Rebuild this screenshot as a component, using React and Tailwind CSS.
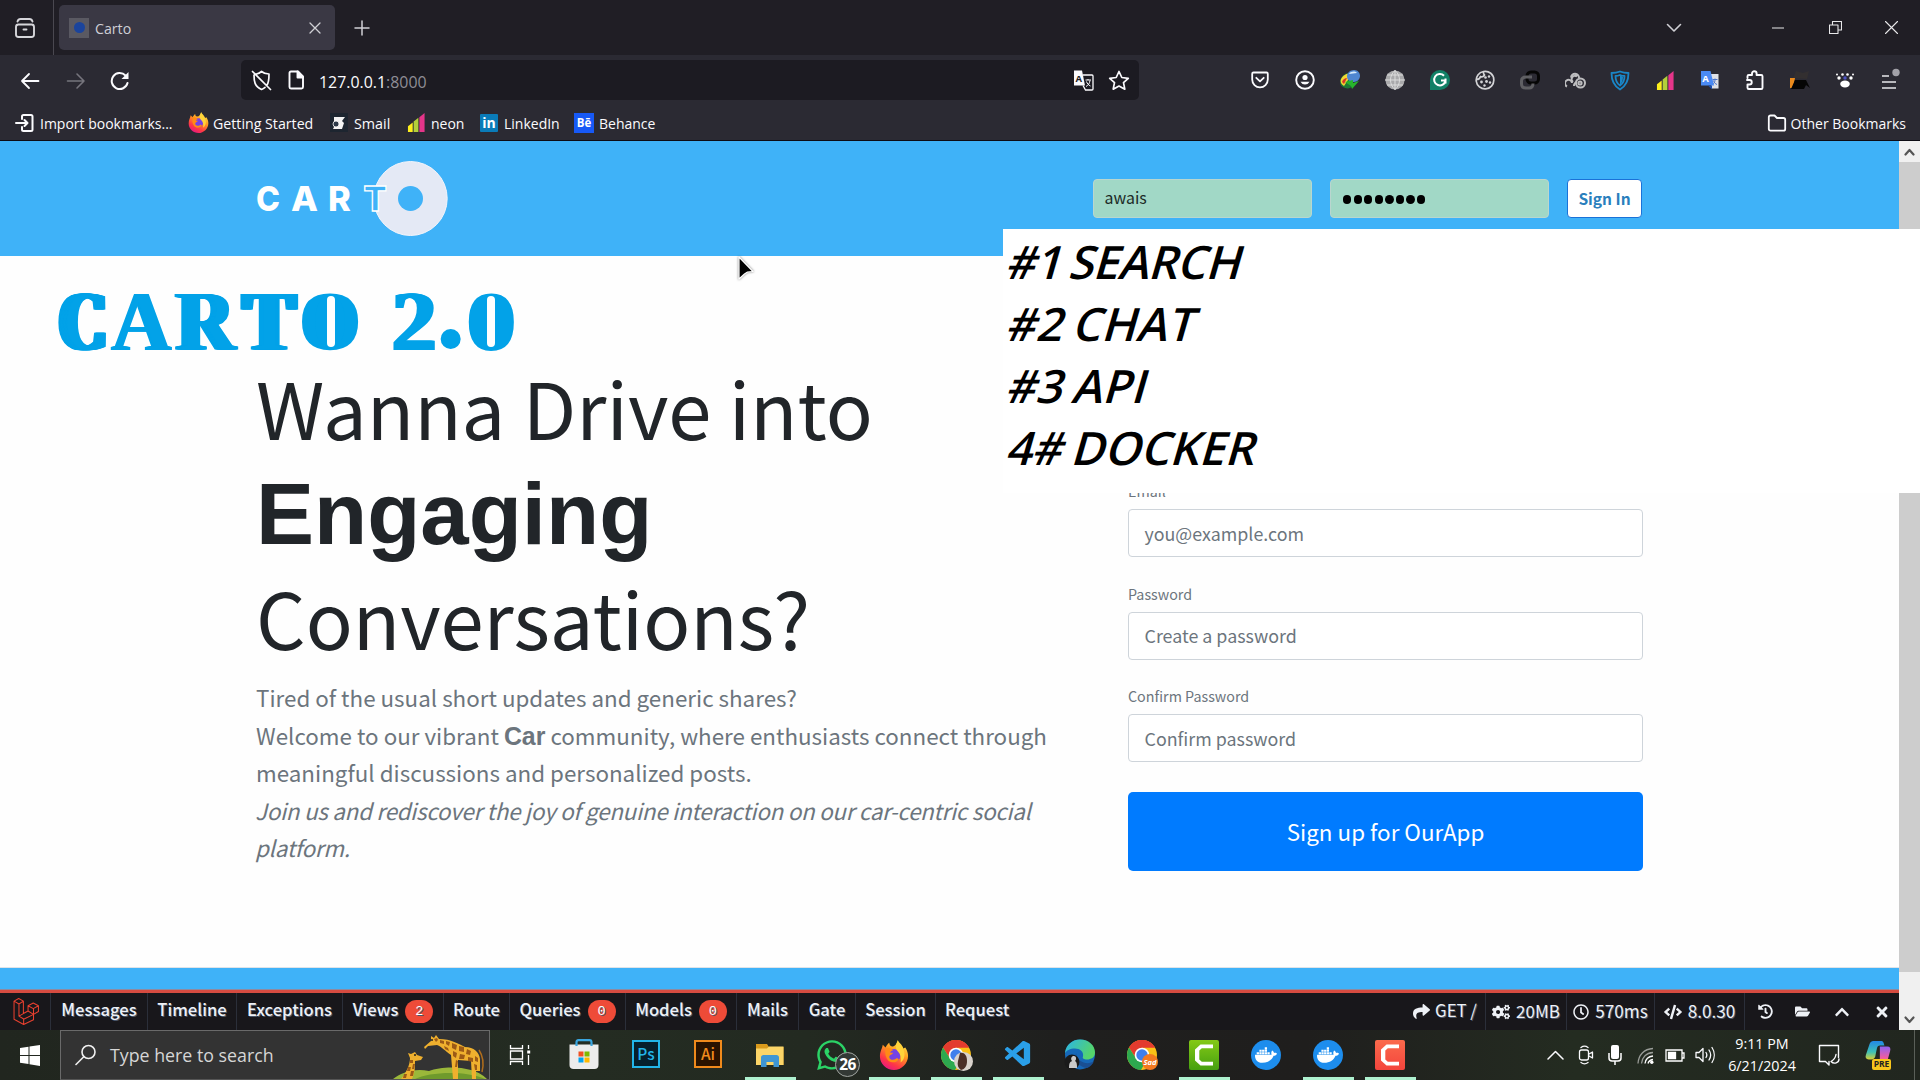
import React from "react";
import { FaShare, FaCogs, FaRegClock, FaCode, FaHistory, FaFolderOpen, FaChevronUp, FaTimes, FaWhatsapp, FaDocker } from "react-icons/fa";
import { VscVscode } from "react-icons/vsc";

/* ---------- shared icons ---------- */

const Line = ({ w = 20, h = 20, box = "0 0 20 20", sw = 1.8, color = "#fbfbfe", children, ...p }) => (
  <svg width={w} height={h} viewBox={box} fill="none" stroke={color} strokeWidth={sw} strokeLinecap="round" strokeLinejoin="round" {...p}>
    {children}
  </svg>
);

function Firefox({ size }) {
  return (
    <svg width={size} height={size} viewBox="0 0 32 32">
      <defs>
        <linearGradient id="ffx" x1="0.8" y1="0" x2="0.25" y2="1">
          <stop offset="0" stopColor="#fff44f" />
          <stop offset="0.4" stopColor="#ff9a1f" />
          <stop offset="0.75" stopColor="#ff3647" />
          <stop offset="1" stopColor="#e31587" />
        </linearGradient>
      </defs>
      <path d="M20 0c1 3 5 5 6 9l2-1c2 3 3 6 3 9 0 8-7 15-15 15S1 25.500 1 17.500C1 12 3.500 9 4 5l3 3c1-2 2.500-4 4-5 0 2 1 3.500 3 4 3 0 5-3 6-7z" fill="url(#ffx)" />
      <circle cx="16" cy="16.500" r="7" fill="#7542e5" />
      <path d="M7 9c3-1 6 0 8 2-2 .5-3 1.500-3 2.500h3c0 2-4 2-4 4.500 0 3 4 4 7 2 1-1 3 0 3 1-2 3-7 4-11 1-3-3-4-8-3-13z" fill="#ff8a16" />
      <path d="M20 1c1 3 6 6 7 12 1 5-1 9-4 11 1-5 0-9-3-12-2-2-3-6 0-11z" fill="#ffd43a" />
    </svg>
  );
}

function Neon({ size }) {
  return (
    <svg width={size} height={size} viewBox="0 0 20 20">
      <path d="M1 14l5-4v10H1z" fill="#fdee1c" />
      <path d="M7 9l5-4v15H7z" fill="#b3cf3a" />
      <path d="M13 4.500L18.500 0v20H13z" fill="#e5358a" />
    </svg>
  );
}

function Chrome({ children }) {
  return (
    <svg width="36" height="36" viewBox="0 0 36 36" className="ml-[2px] shrink-0">
      <circle cx="17" cy="18" r="15" fill="#fbc116" />
      <path d="M4 10.500A15 15 0 0 1 30 10.500H17z" fill="#e33b2e" />
      <path d="M4 10.500L11 21.500 17 18V10.500h13A15 15 0 0 0 4 10.500z" fill="#e33b2e" />
      <path d="M4 10.500A15 15 0 0 0 16 33l6.500-11.500L11 21.500z" fill="#2da94f" />
      <circle cx="17" cy="18" r="7.300" fill="#fff" />
      <circle cx="17" cy="18" r="5.700" fill="#3f7fec" />
      {children}
    </svg>
  );
}

/* ---------- browser chrome ---------- */

function TabBar() {
  return (
    <div className="flex h-[55px] shrink-0 items-center bg-[#201e25]">
      <div className="flex h-full w-[54px] items-center justify-center border-r border-[#4a4850] pr-1">
        <Line w={22} h={22} box="0 0 22 22" sw={1.9} color="#d6d6da">
          <rect x="2" y="7.500" width="18" height="12.500" rx="2.500" />
          <path d="M3.500 4.500C4 2.800 5 2 6.500 2h9c1.500 0 2.500.8 3 2.500M9.500 12.500h3" />
        </Line>
      </div>
      <div className="ml-[5px] flex h-[45px] w-[276px] items-center rounded-[5px] bg-[#3a3844] pl-[10px] pr-[13px]">
        <div className="flex h-5 w-5 items-center justify-center bg-[#5a5962]">
          <div className="h-[11px] w-[11px] rounded-full bg-[#1b449c]" />
        </div>
        <span className="ml-[6px] flex-1 pt-[2px] text-[14.2px] text-[#cfcfd6]">Carto</span>
        <Line w={14} h={14} box="0 0 14 14" sw={1.3} color="#d0d0d5"><path d="M2 2l10 10M12 2L2 12" /></Line>
      </div>
      <Line w={18} h={18} box="0 0 18 18" sw={1.5} color="#d0d0d5" className="ml-[18px]"><path d="M9 2v14M2 9h14" /></Line>
      <div className="ml-auto flex items-center">
        <Line w={18} h={18} box="0 0 18 18" sw={1.6} color="#d0d0d5" className="mr-[89px]"><path d="M2.500 5.500L9 12l6.500-6.500" /></Line>
        <Line w={12} h={12} box="0 0 12 12" sw={1.1} color="#e8e8ea" className="mr-[45px]"><path d="M0 6h12" /></Line>
        <Line w={13} h={13} box="0 0 13 13" sw={1.1} color="#e8e8ea" className="mr-[43px]"><path d="M.5 4h8.500v8.500H.5zM3.500 4V.5h9V9H9" /></Line>
        <Line w={13} h={13} box="0 0 13 13" sw={1.1} color="#e8e8ea" className="mr-[22px]"><path d="M.5.5l12 12M12.500.5l-12 12" /></Line>
      </div>
    </div>
  );
}

const Cell = ({ children }) => <div className="flex w-[45px] items-center justify-center">{children}</div>;

function Extensions() {
  return (
    <div className="ml-auto mr-[7.500px] flex items-center">
      <Cell><Line sw={1.8}><path d="M3.500 2.500h13c.8 0 1.300.5 1.300 1.300V9.500a7.800 7.800 0 0 1-15.600 0V3.800c0-.8.5-1.300 1.300-1.300zM6.300 7.800L10 11.300l3.700-3.500" /></Line></Cell>
      <Cell>
        <Line sw={1.9}><circle cx="10" cy="10" r="8.800" /><circle cx="10" cy="7.500" r="2.600" fill="#fbfbfe" stroke="none" /><path d="M5.500 11.800h9a5 5 0 0 1-9 0z" fill="#fbfbfe" stroke="none" /></Line>
      </Cell>
      <Cell>
        <svg width="22" height="20" viewBox="0 0 22 20">
          <path d="M1 11c1-4 4-7 8-8l2 6 3 7c-3 3-7 3-10 1-2-1-3-3-3-6z" fill="#1d7a34" />
          <path d="M2 9c2-4 6-6 9-5l-2 6-4 6C2 14 1 12 2 9z" fill="#f2d634" />
          <path d="M3 12c1-3 3-4 5-4l-3 6z" fill="#d8352a" />
          <path d="M8 6c0-3 3-6 7-6 4 0 6 3 6 6s-3 6-6 6c-4 0-7-2-7-6z" fill="#4f86d0" />
          <path d="M10 4c2-3 6-3 8-1-3 0-5 1-8 1z" fill="#d8ecfb" />
          <path d="M6 12l8-2v3l6-2-7 8-1-3z" fill="#27b52c" />
        </svg>
      </Cell>
      <Cell>
        <svg width="20" height="20" viewBox="0 0 20 20"><circle cx="10" cy="10" r="9.600" fill="#a9a9ab" /><path d="M0 10h20M10 0v20M2 5h16M2 15h16M10 .5c-6 5-6 14 0 19M10 .5c6 5 6 14 0 19" stroke="#dcdcdc" strokeWidth="1" fill="none" /></svg>
      </Cell>
      <Cell>
        <svg width="20" height="20" viewBox="0 0 20 20"><path d="M0 20V10A10 10 0 1 1 10 20z" fill="#118066" /><path d="M14 5.800A5.700 5.700 0 1 0 15.500 10.500h-4.500M15.500 8.500v5" stroke="#fff" strokeWidth="2" fill="none" /></svg>
      </Cell>
      <Cell>
        <Line sw={1.7} color="#d3d3d6"><path d="M8.500 1.500A8.800 8.800 0 1 0 18.800 10 8.500 8.500 0 0 0 8.500 1.500c-.3 2 .3 3 1 3.500-1 2-3 2-4 1.500-.5 2-2 3-4 3" /><g fill="#d3d3d6" stroke="none"><circle cx="10.500" cy="7.500" r="1.300" /><circle cx="14" cy="6.500" r="1.200" /><circle cx="6.500" cy="12" r="1.400" /><circle cx="11.500" cy="11.500" r="1.400" /><circle cx="9.500" cy="15.500" r="1.200" /><circle cx="15" cy="12.500" r="1.200" /></g></Line>
      </Cell>
      <Cell>
        <svg width="20" height="20" viewBox="0 0 20 20" fill="none" strokeWidth="3"><rect x="7" y="2" width="11.500" height="11" rx="4" stroke="#060606" /><path d="M13 13.500c0 3-1.500 4.500-4 4.500H6c-3 0-4.500-1.500-4.500-4v-3C1.500 8.500 3 7 6 7h6" stroke="#5f5f63" /></svg>
      </Cell>
      <Cell>
        <svg width="21" height="20" viewBox="0 0 21 20" fill="none" stroke="#bdbdbf" strokeWidth="2"><path d="M2 16.500a3.500 3.500 0 1 1 5-3.500" /><path d="M6 7.500a4 4 0 1 1 8 .5M8 12a3 3 0 0 1 4-5.500" /><circle cx="15.500" cy="13" r="4.500" /><circle cx="15" cy="13" r="1.600" /><path d="M9 16c0-2 1-3 2-4" /></svg>
      </Cell>
      <Cell>
        <svg width="20" height="21" viewBox="0 0 20 21" fill="none" stroke="#1a86c7" strokeWidth="1.800" strokeLinejoin="round"><path d="M1.500 3c3 0 6-.5 8.500-1.500C12.500 2.500 15.500 3 18.500 3c0 8-2.500 13-8.500 16.500C4 16 1.500 11 1.500 3z" /><path d="M5.500 6c2 0 3-.3 4.500-1 1.500.7 2.500 1 4.500 1 0 4.500-1.500 7.500-4.500 9.500C7 13.500 5.500 10.500 5.500 6z" /><path d="M10 5v10c2-2 3-5 3-8z" fill="#1a86c7" stroke="none" /></svg>
      </Cell>
      <Cell><Neon size={19} /></Cell>
      <Cell>
        <svg width="20" height="20" viewBox="0 0 20 20"><path d="M8 4h10.500v14.500H12z" fill="#dfe1e6" /><path d="M12.500 9.500h5M15 8.500v1.500c0 2-1 3.500-2.500 4.500M13.500 10.500c.5 2 2 3.500 3.500 4" stroke="#4c74c9" strokeWidth="1" fill="none" /><path d="M1 1h9.500L14 15.500H1z" fill="#4a8af4" /><path d="M12 15.500h-4l4 4z" fill="#1d4fae" /><text x="2.300" y="11.500" fontSize="9.500" fontWeight="700" fill="#fff" fontFamily="Open Sans, sans-serif">A</text></svg>
      </Cell>
      <Cell>
        <Line sw={1.9}><path d="M2.500 8V6.300c0-.7.5-1.300 1.300-1.300H7V3.500a2.300 2.300 0 0 1 4.600 0V5h4.600c.8 0 1.300.5 1.300 1.300v11.400c0 .8-.5 1.300-1.300 1.300H3.800c-.8 0-1.300-.5-1.300-1.300V14.500h2a2.200 2.200 0 0 0 0-4.500H2" /></Line>
      </Cell>
      <Cell>
        <svg width="21" height="20" viewBox="0 0 21 20"><path d="M3 8l3-7 7 2 6-2-2 8z" fill="#332f30" /><path d="M0 8h5l-2 10H0z" fill="#e98a1d" /><path d="M1 19l4-9h11l4 8-4-3-2 4z" fill="#050505" /></svg>
      </Cell>
      <Cell>
        <svg width="20" height="18" viewBox="0 0 20 18" fill="#fff"><ellipse cx="10" cy="13" rx="4.800" ry="3.400" /><circle cx="4" cy="7" r="1.700" /><circle cx="7.500" cy="3.500" r="1.300" /><circle cx="12.500" cy="3.500" r="1.300" /><circle cx="16" cy="7" r="1.700" /><circle cx="10" cy="7" r="1.700" fill="#4b51c4" /><circle cx="2" cy="3.500" r="1" /><circle cx="18" cy="3.500" r="1" /></svg>
      </Cell>
      <Cell>
        <svg width="20" height="22" viewBox="0 0 20 22" className="-mt-[3px]"><path d="M2 8h7M2 14h14M2 20h14" stroke="#e8e8ec" strokeWidth="1.700" /><circle cx="16" cy="4.500" r="3.700" fill="#a2a1a8" /></svg>
      </Cell>
    </div>
  );
}

function NavBar() {
  return (
    <div className="flex h-[50px] shrink-0 items-center">
      <Line w={20} h={18} box="0 0 20 18" className="ml-5 mt-[2px]"><path d="M18.500 9H2M9 2L2 9l7 7" /></Line>
      <Line w={20} h={18} box="0 0 20 18" color="#76757d" sw={1.6} className="ml-[26px] mt-[2px]"><path d="M1.500 9H18M11 2l7 7-7 7" /></Line>
      <Line w={20} h={20} sw={2} className="ml-6 mt-[2px]"><path d="M17.500 12A8 8 0 1 1 15.500 4.500" /><path d="M18.500 1v7h-7z" fill="#fbfbfe" stroke="none" /></Line>
      <div className="ml-[111px] flex h-10 w-[898px] items-center rounded-[5px] bg-[#1c1b22] pl-[10px] pr-[9px]">
        <Line w={21} h={21} box="0 0 21 21" sw={1.7}><path d="M5.500 4c2-.5 3.500-1.300 5-2.500 2 1.700 4.500 2.500 7.500 2.500 0 5 0 8-2 11M3 5c0 6 .5 11.500 7.500 14.500 1.500-.6 2.500-1.300 3.500-2.200M1.500 1.500l18 18" /></Line>
        <Line w={18} h={20} box="0 0 18 20" sw={1.9} className="ml-[15px]"><path d="M4 1.500h7l5 5V17c0 1-.5 1.500-1.500 1.500h-10.500c-1 0-1.500-.5-1.500-1.500V3C2.500 2 3 1.500 4 1.500z" /><path d="M10.500 1.500v6h5.500z" fill="#fbfbfe" /></Line>
        <span className="ml-[14px] pt-[5px] text-[15.9px] text-[#fbfbfe]">127.0.0.1<span className="text-[#8f8e96]">:8000</span></span>
        <svg width="21" height="21" viewBox="0 0 21 21" className="ml-auto mr-[14px]">
          <path d="M1 .5h8l3 15H1z" fill="#fbfbfe" />
          <path d="M9.500 5H19a1 1 0 0 1 1 1v13a1 1 0 0 1-1 1h-6.500L10 15.500" fill="none" stroke="#fbfbfe" strokeWidth="1.300" />
          <path d="M12.500 10h5.500M15 9v1M13 16.500c2.500-1.500 3.500-3 4-6M13.500 11.500c.5 2 2 3.500 4 4.500" stroke="#fbfbfe" strokeWidth="1" fill="none" />
          <text x="2.500" y="11.500" fontSize="9.500" fontWeight="700" fill="#1c1b22" fontFamily="Open Sans, sans-serif">A</text>
        </svg>
        <Line w={22} h={21} box="0 0 22 21" sw={1.7}><path d="M11 1.500l2.800 6 6.500.8-4.800 4.400 1.300 6.500L11 16l-5.800 3.200 1.300-6.500L1.700 8.300l6.500-.8z" /></Line>
      </div>
      <Extensions />
    </div>
  );
}

function BookmarksBar() {
  return (
    <div className="flex h-[36px] shrink-0 items-center border-b border-[#0d0c14] text-[14px] text-[#fbfbfe] [&>span]:pt-[2px]">
      <Line w={20} h={20} sw={2} className="ml-[15px]"><path d="M7 6V3.500C7 2.500 7.500 2 8.500 2h7.500c1 0 1.500.5 1.500 1.500v13c0 1-.5 1.500-1.500 1.500H8.500C7.500 18 7 17.500 7 16.500V14M1 10h11M9.500 7l3 3-3 3" /></Line>
      <span className="ml-[5px] w-[148px]">Import bookmarks...</span>
      <Firefox size={21} />
      <span className="ml-[4px] w-[117px] text-[14.2px]">Getting Started</span>
      <svg width="18" height="19" viewBox="0 0 18 19"><path d="M0 0h18v19H0z" fill="#1d2530" /><path d="M4 4h11l-3 4 2 2-2 6H3l2-4h4l-5-3z" fill="#f3f3f3" /><circle cx="6" cy="11" r="3" fill="#2c3948" stroke="#fff" strokeWidth=".8" /></svg>
      <span className="ml-[6px] w-[53px] text-[14.3px]">Smail</span>
      <Neon size={19} />
      <span className="ml-[5px] w-[49px]">neon</span>
      <div className="flex h-[18px] w-[18px] items-center justify-center rounded-[1px] bg-[#0a7bb8] text-[14px] font-bold leading-none text-white">in</div>
      <span className="ml-[6px] w-[70px]">LinkedIn</span>
      <div className="flex h-[20px] w-[20px] items-center justify-center bg-[#1759f6] text-[11.5px] font-bold leading-none text-white">Bē</div>
      <span className="ml-[5px]">Behance</span>
      <Line w={20} h={18} box="0 0 20 18" sw={1.8} className="ml-auto"><path d="M3.500 1.500h4L10 4h6.500c1 0 1.700.7 1.700 1.700V15c0 1-.7 1.700-1.700 1.700h-13c-1 0-1.700-.7-1.700-1.700V3.200c0-1 .7-1.700 1.700-1.700z" /></Line>
      <span className="ml-[4px] mr-[14px]">Other Bookmarks</span>
    </div>
  );
}

/* ---------- web page ---------- */

function CartoLogo() {
  return (
    <svg width="194" height="77" viewBox="0 0 194 77" fontFamily="Inter, sans-serif" fontSize="34.500" fontWeight="800">
      <ellipse cx="154.500" cy="38.500" rx="36.700" ry="37" fill="#e4e9f5" stroke="#f3f5fb" strokeWidth="1" />
      <circle cx="154.500" cy="38.500" r="12.500" fill="#3fb2f8" />
      <text x="0" y="51" fill="#fff" textLength="24" lengthAdjust="spacingAndGlyphs">C</text>
      <text x="35" y="51" fill="#fff" textLength="27" lengthAdjust="spacingAndGlyphs">A</text>
      <text x="72" y="51" fill="#fff">R</text>
      <text x="107.500" y="51" fill="#3fb2f8" stroke="#fff" strokeWidth="1.300" fontWeight="800" textLength="23.500" lengthAdjust="spacingAndGlyphs">T</text>
    </svg>
  );
}

function PageHeader() {
  return (
    <header className="flex h-[115px] shrink-0 items-center bg-[#3fb2f8] pl-[256px]">
      <CartoLogo />
      <div className="ml-auto mr-[257px] flex items-center gap-[18px]">
        <div className="flex h-[39px] w-[219px] items-center rounded-[4px] border border-[#b9d6cf] bg-[#a1d8c6] pb-px pl-[10.500px] text-[15.900px] text-[#1c2b26]">awais</div>
        <div className="flex h-[39px] w-[219px] items-center gap-[2.400px] rounded-[4px] border border-[#b9d6cf] bg-[#a1d8c6] pl-[12px] pt-[2px]">
          {[0, 1, 2, 3, 4, 5, 6, 7].map((i) => (
            <span key={i} className="h-[8.200px] w-[8.200px] rounded-full bg-black" />
          ))}
        </div>
        <button className="flex h-[39px] w-[75px] items-center justify-center rounded-[4px] border border-[#1a72d8] bg-white text-[15.500px] font-bold text-[#2a7fbd]">Sign In</button>
      </div>
    </header>
  );
}

function Hero() {
  return (
    <section className="w-[1128px] shrink-0 pl-[256px] pt-[98px]">
      <h1 className="text-[77.800px] leading-[105px] text-[#212529]">
        <span className="block h-[105px] whitespace-nowrap">Wanna Drive into</span>
        <span className="block h-[105px] font-['Liberation_Sans'] text-[87px] font-bold leading-[109px]">Engaging</span>
        <span className="block h-[105px] whitespace-nowrap">Conversations?</span>
      </h1>
      <div className="mt-[10px] w-[820px] text-[22.380px] leading-[37.500px] text-[#6c757d]">
        <p>Tired of the usual short updates and generic shares?</p>
        <p>
          Welcome to our vibrant <b className="font-['Liberation_Sans'] text-[24.900px] leading-none">Car</b> community, where enthusiasts connect through
          <br />
          meaningful discussions and personalized posts.
        </p>
        <p className="-ml-px italic tracking-[-0.275px]">
          Join us and rediscover the joy of genuine interaction on our car-centric social
          <br />
          platform.
        </p>
      </div>
    </section>
  );
}

const Field = ({ label, placeholder }) => (
  <div className="mb-[25.500px]">
    <div className="h-[21px] text-[14.300px] leading-[21px] text-[#6c757d]">{label}</div>
    <div className="mt-2 flex h-[48px] items-center rounded-[4px] border border-[#ced4da] bg-white pl-[15.500px] text-[17.850px] text-[#6c757d]">{placeholder}</div>
  </div>
);

function SignUpForm() {
  return (
    <section className="flex w-[515px] flex-col pt-[224px]">
      <Field label="Email" placeholder="you@example.com" />
      <Field label="Password" placeholder="Create a password" />
      <Field label="Confirm Password" placeholder="Confirm password" />
      <button className="mt-[4px] flex h-[79px] w-full items-center justify-center rounded-[5px] bg-[#007bff] pt-[2px] text-[22.400px] text-white">Sign up for OurApp</button>
    </section>
  );
}

/* Round poster letters: an oval fills the counter, a narrow slit reopens it. */
const slitted =
  "before:absolute before:left-1/2 before:top-[24px] before:h-[51px] before:-translate-x-1/2 before:rounded-[50%] before:bg-[#02a2e8] after:absolute after:left-1/2 after:top-[24px] after:h-[51px] after:w-[8px] after:-translate-x-1/2 after:rounded-[4px] after:bg-[#fefefe]";

const posterLetters = [
  { ch: "C", cell: "w-[52px]", look: "translate-x-[5px] scale-x-[0.76] [text-shadow:-1px_0,-2px_0,-3px_0,-4px_0,-5px_0,-6px_0,-7px_0,-8px_0,-9px_0,-10px_0,-11px_0,-12px_0]" },
  { ch: "A", cell: "w-[63px]", look: "scale-x-[0.97] translate-x-[2px] [text-shadow:-1px_0,-2px_0,-3px_0]" },
  { ch: "R", cell: "w-[68px]", look: "scale-x-[0.94] translate-x-[3px] [text-shadow:-1px_0,-2px_0,-3px_0,-4px_0,-5px_0,-6px_0,-7px_0]" },
  { ch: "T", cell: "w-[58px]", look: "scale-x-[0.9] [text-shadow:-1px_0,-2px_0,-3px_0,-4px_0,-5px_0,1px_0,2px_0,3px_0,4px_0,5px_0]" },
  { ch: "O", cell: `relative w-[65px] before:w-[46px] ${slitted}`, look: "scale-x-[0.97]" },
  { ch: "2", cell: "ml-[28px] w-[46px]", look: "scale-x-[1.05] [text-shadow:-1px_0,-2px_0,1px_0,2px_0]" },
  { ch: ".", cell: "w-[28px]", look: "-translate-y-[4px] scale-[1.45] origin-[50%_78%]" },
  { ch: "0", cell: `relative w-[52px] before:w-[36px] ${slitted}`, look: "scale-x-[1.25]" },
];

function PosterTitle() {
  return (
    <div className="absolute left-[57px] top-[272px] flex h-[98px] font-['Liberation_Serif'] text-[85px] font-bold leading-[98px] text-[#02a2e8]">
      {posterLetters.map((l, i) => (
        <span key={i} className={`inline-flex justify-center ${l.cell}`}>
          <span className={`inline-block ${l.look}`}>{l.ch}</span>
        </span>
      ))}
    </div>
  );
}

function FeatureNotes() {
  return (
    <div className="absolute left-[1003px] top-[229px] h-[264px] w-[917px] bg-white pl-[2px] pt-px font-['Open_Sans'] text-[46px] font-semibold leading-[62px] text-black">
      <div className="origin-[0_78%] -skew-x-[16deg] tracking-[-0.500px] [word-spacing:-4px]">#1 SEARCH</div>
      <div className="origin-[0_78%] -skew-x-[16deg] tracking-[0.400px] [word-spacing:-3px]">#2 CHAT</div>
      <div className="origin-[0_78%] -skew-x-[16deg] tracking-[0.300px] [word-spacing:-3px]">#3 API</div>
      <div className="origin-[0_78%] -skew-x-[16deg] [word-spacing:-3px]">4# DOCKER</div>
    </div>
  );
}

/* ---------- debug bar ---------- */

const Badge = ({ children }) => (
  <span className="ml-[7px] mt-[4px] flex h-[23px] w-[28px] items-center justify-center rounded-full bg-[#ee4b38] font-['Liberation_Mono'] text-[13.500px] font-normal text-white">{children}</span>
);
const Tab = ({ w, children, n }) => (
  <div className={`${w} flex h-full items-center justify-center border-r border-[#2b2f3a] pb-[4px]`}>
    <span>{children}</span>
    {n !== undefined && <Badge>{n}</Badge>}
  </div>
);

function DebugBar() {
  return (
    <div className="flex h-[37px] shrink-0 items-center bg-[#18171b] text-[16.600px] font-medium leading-none text-[#eef1f6] [text-shadow:1px_1px_#4a5568]">
      <div className="flex h-full w-[51px] items-center justify-center border-r border-[#2b2f3a] pl-[2px]">
        <svg width="27" height="27" viewBox="0 0 50 52" fill="none" stroke="#e8402f" strokeWidth="2" strokeLinejoin="round">
          <path d="M1 6l9-5 9 5v24l9-5V15l10-5.500L48 15v11l-9.500 5.500V42L19.500 51 1 41zM1 6l9.500 5.500V35l9 5.500M19 6l-8.500 5.500M28 15l10 5.500L48 15M38.500 20.500v11L19.500 41v10M28 25l10.500 6.500M19 30l-8.500 5" />
        </svg>
      </div>
      <Tab w="w-[97px]">Messages</Tab>
      <Tab w="w-[89px]">Timeline</Tab>
      <Tab w="w-[106px]">Exceptions</Tab>
      <Tab w="w-[101px]" n={2}>Views</Tab>
      <Tab w="w-[66px]">Route</Tab>
      <Tab w="w-[116px]" n={0}>Queries</Tab>
      <Tab w="w-[111px]" n={0}>Models</Tab>
      <Tab w="w-[62px]">Mails</Tab>
      <Tab w="w-[57px]">Gate</Tab>
      <Tab w="w-[80px]">Session</Tab>
      <div className="pb-[4px] pl-[9px]">Request</div>
      <div className="ml-auto flex h-full items-center font-normal">
        <div className="flex h-full w-[81px] items-center justify-center gap-[5px] border-r border-[#2b2f3a]"><FaShare size={17} /><span className="pb-[2px] text-[16.800px]">GET /</span></div>
        <div className="flex h-full w-[81px] items-center justify-center gap-[6px] border-r border-[#2b2f3a]"><FaCogs size={18} /><span className="pb-[2px] text-[17px]">20MB</span></div>
        <div className="flex h-full w-[88px] items-center justify-center gap-[6px] border-r border-[#2b2f3a]"><FaRegClock size={16} /><span className="pb-[2px] text-[17.200px]">570ms</span></div>
        <div className="flex h-full w-[90px] items-center justify-center gap-[6px] border-r border-[#2b2f3a]"><FaCode size={18} /><span className="pb-[2px] text-[17.200px]">8.0.30</span></div>
        <div className="flex w-[40px] justify-center"><FaHistory size={15} /></div>
        <div className="flex w-[34px] justify-center"><FaFolderOpen size={15} /></div>
        <div className="flex w-[46px] justify-center"><FaChevronUp size={16} /></div>
        <div className="flex w-[34px] justify-center"><FaTimes size={16} /></div>
      </div>
    </div>
  );
}

function Scrollbar() {
  return (
    <div className="flex w-[21px] shrink-0 flex-col bg-[#f0f0f0]">
      <div className="flex h-[21px] items-center justify-center"><Line w={11} h={8} box="0 0 11 8" sw={2.2} color="#555"><path d="M1.500 6.500l4-4.500 4 4.500" /></Line></div>
      <div className="h-[810px] bg-[#cdcdcd]" />
      <div className="mt-auto flex h-[21px] items-center justify-center"><Line w={11} h={8} box="0 0 11 8" sw={2.2} color="#555"><path d="M1.500 1.500l4 4.500 4-4.500" /></Line></div>
    </div>
  );
}

/* ---------- taskbar ---------- */

function Giraffes() {
  return (
    <svg width="96" height="49" viewBox="0 0 96 49">
      <path d="M0 49c8-6 20-11 36-8 14-5 44-6 58 8z" fill="#9bb83a" />
      <path d="M22 49c14-7 50-9 70 0z" fill="#6f9a2c" />
      <g fill="#efb02e">
        <path d="M31 17l7-6 0-5 3 2 2-3 3 4c12 0 20 5 26 8 9 0 14 5 15 12v12h-4l0 8h-4l-1-18-13-1 0 19h-5l-2-24c-6-4-9-8-14-10l-9 1-3 3z" />
        <path d="M8 49c5-6 9-14 9-21l-2-5 3 1 4-2 2 3 6 2-2 3-6 1c0 6 0 12-3 18z" />
      </g>
      <g fill="#9c5a16">
        <path d="M47 10l4 1v3l-4-1zM53 11l4 1-1 4-3-2zM51 16l4 2 1 3-4-2zM59 13l5 2-1 5-4-2zM66 16l5 1 0 5-5-1zM74 19l4 2-1 4-4-1zM60 21l4 2-1 5-3-2zM67 24l5 1-1 4-5 0zM75 27l5 1 0 4-5-1zM63 30l2 1-1 6-2 0zM82 26l3 2 0 4-3-1zM81 34l3 1 0 5-2 0z" />
        <path d="M17 30l3 0 0 3-3 0zM20 34l2 0-1 5-2 0zM15 37l3 0-1 4-3 0zM18 41l3 0-1 5-3 0zM11 44l3 0-1 4-3 0zM41 9l3-1 1 2-2 2z" />
      </g>
      <path d="M86 20c4 6 5 14 3 22" stroke="#b06d1c" strokeWidth="1.500" fill="none" />
      <circle cx="39" cy="10" r="1" fill="#222" /><circle cx="22" cy="25" r="1" fill="#222" />
    </svg>
  );
}

const DockItem = ({ on, children }) => (
  <div className="relative flex h-full w-[62px] items-center justify-center pb-[1px]">
    {children}
    {on && <span className="absolute bottom-0 left-[6px] h-[3px] w-[51px] bg-[#aef1cf]" />}
  </div>
);

const Adobe = ({ color, bg, children }) => (
  <svg width="28" height="28" viewBox="0 0 28 28" className="-mt-[2px]">
    <rect x="1" y="1" width="26" height="26" fill={bg} stroke={color} strokeWidth="2" />
    <text x="14" y="19.500" textAnchor="middle" fontSize="15.500" fontFamily="Noto Sans CJK SC, sans-serif" fontWeight="500" fill={color}>{children}</text>
  </svg>
);

const Camtasia = ({ a, b, id }) => (
  <svg width="30" height="30" viewBox="0 0 30 30">
    <defs><linearGradient id={id} x1="0" y1="0" x2="0" y2="1"><stop offset="0" stopColor={a} /><stop offset="1" stopColor={b} /></linearGradient></defs>
    <rect width="30" height="30" rx="2" fill={`url(#${id})`} />
    <path d="M24 4.500H11.500L6 9.500v11l5.500 5H24v-3.800H12.800l-2.500-2.200v-9l2.500-2.200H24z" fill="#fff" />
  </svg>
);

const Whale = () => (
  <div className="flex h-[30px] w-[30px] items-center justify-center rounded-full bg-[#1d8ded] text-white"><FaDocker size={22} /></div>
);

function Taskbar() {
  return (
    <div className="flex h-[50px] shrink-0 bg-[linear-gradient(90deg,#21261f_0%,#242c22_30%,#232a21_42%,#1f1f1e_55%,#1f1e1d_68%,#242c21_82%,#21261f_100%)] text-[#f0f0f0]">
      <div className="flex w-[60px] items-center pl-[20px]">
        <svg width="20" height="21" viewBox="0 0 20 21" fill="#fff"><path d="M0 3l8.500-1.200V10H0zM9.500 1.600L20 0v10H9.500zM0 11h8.500v8L0 17.800zM9.500 11H20v10L9.500 19.300z" /></svg>
      </div>
      <div className="flex w-[430px] items-center border border-b-[#555] border-[#6a6a6a] bg-[#333] pl-[14px]">
        <Line w={22} h={22} box="0 0 22 22" sw={1.600} color="#f0f0f0"><circle cx="13.500" cy="8" r="6.500" /><path d="M9 12.500l-8 8" /></Line>
        <span className="ml-[13px] text-[17.800px] text-[#d6d6d6]">Type here to search</span>
        <div className="ml-auto self-end"><Giraffes /></div>
      </div>
      <div className="ml-[1px] flex h-full">
        <DockItem>
          <svg width="22" height="20" viewBox="0 0 22 20" fill="none" stroke="#fff" strokeWidth="1.300" className="-mr-[4px] -ml-[8px]"><path d="M1.500 0v3.500h12V0M1.500 6h12v8h-12zM1.500 20v-3.500h12V20M19.500 0v4M19.500 10v10" /><rect x="18.200" y="5.500" width="3" height="3" fill="#fff" stroke="none" /></svg>
        </DockItem>
        <DockItem>
          <svg width="30" height="31" viewBox="0 0 30 31"><path d="M.5 5.500h29V26c0 2.500-1.500 4-4 4h-21c-2.500 0-4-1.500-4-4z" fill="#ececec" /><path d="M7.500 7V3.500C7.500 2 8 1.200 9.500 1.200h11c1.500 0 2 .8 2 2.300V7" fill="none" stroke="#3aa6df" strokeWidth="2.200" /><path d="M9.500 12.500h5v5h-5z" fill="#f05022" /><path d="M15.500 12.500h5v5h-5z" fill="#7fb900" /><path d="M9.500 18.500h5v5h-5z" fill="#02a3ee" /><path d="M15.500 18.500h5v5h-5z" fill="#feb800" /></svg>
        </DockItem>
        <DockItem><Adobe color="#22b5e8" bg="#06202c">Ps</Adobe></DockItem>
        <DockItem><Adobe color="#f08a1c" bg="#2a1300">Ai</Adobe></DockItem>
        <DockItem on>
          <svg width="28" height="24" viewBox="0 0 28 24"><path d="M0 1h11l2 3h14.500v18H0z" fill="#d99a1c" /><path d="M0 5.500h11l2-2h14.500V22H0z" fill="#fbd568" /><path d="M5 24V14.500C5 13 6 12 7.500 12h13c1.500 0 2.500 1 2.500 2.500V24h-5.500v-5h-7v5z" fill="#3f96d4" /></svg>
        </DockItem>
        <DockItem>
          <FaWhatsapp size={34} color="#2bd366" className="-ml-[1px]" />
          <span className="absolute left-[34px] top-[22px] flex h-[25px] w-[25px] items-center justify-center rounded-full border border-[#a0a5a0] bg-[#333935] text-[15.500px] font-bold leading-none tracking-[-0.5px] text-white">26</span>
        </DockItem>
        <DockItem on><Firefox size={30} /></DockItem>
        <DockItem on>
          <Chrome><circle cx="24.500" cy="24.500" r="9.500" fill="#d9d2cc" /><path d="M21 16c4-1 7 2 7 8 0 5-2 8-6 9-3-2-4-5-3-9z" fill="#4b2f27" /></Chrome>
        </DockItem>
        <DockItem on><VscVscode size={31} color="#2a9fe8" /></DockItem>
        <DockItem>
          <svg width="32" height="31" viewBox="0 0 32 31">
            <defs><linearGradient id="edg" x1="0" y1="0" x2="1" y2=".4"><stop offset="0" stopColor="#2ab4ea" /><stop offset="1" stopColor="#55d46a" /></linearGradient></defs>
            <circle cx="16" cy="15.500" r="15" fill="#1668b8" />
            <path d="M1 14C2 5 9 .5 16 .5c9 0 15 6 15 13 0 5-4 7-8 7-3 0-5-1-4-3 1-5-3-8-8-8-5 0-9 2-10 5z" fill="url(#edg)" />
            <path d="M12 14c-2 8 3 14 11 15 3-1 6-4 7-7-5 4-16 3-18-8z" fill="#1a4f93" />
            <circle cx="8" cy="23" r="7.500" fill="#1a1a1a" /><path d="M5 29c0-5 1-6 3-7-2-3 0-5 2-5s3 3 1 5c2 1 2 4 2 7z" fill="#c9c9c9" />
          </svg>
        </DockItem>
        <DockItem>
          <Chrome><circle cx="25" cy="25" r="8" fill="#f47920" /><text x="25" y="28" textAnchor="middle" fontSize="7.500" fontWeight="700" fontStyle="italic" fill="#fff" fontFamily="Open Sans, sans-serif">Sad</text></Chrome>
        </DockItem>
        <DockItem on><Camtasia id="cg" a="#84c916" b="#46a010" /></DockItem>
        <DockItem><Whale /></DockItem>
        <DockItem on><Whale /></DockItem>
        <DockItem on><Camtasia id="cr" a="#fb6a4c" b="#f4453d" /></DockItem>
      </div>
      <div className="ml-auto flex h-full items-center">
        <div className="flex w-[30px] justify-center"><Line w={17} h={10} box="0 0 17 10" sw={1.5}><path d="M1 9l7.500-7.500L16 9" /></Line></div>
        <div className="flex w-[31px] justify-center"><Line w={16} h={20} box="0 0 16 20" sw={1.300}><rect x="1.500" y="5" width="9" height="10" rx="2" /><path d="M11 9l3.500-2v6L11 11M3 2.500c2-1.500 5-1.500 7 0M3 17.500c2 1.500 5 1.500 7 0" /></Line></div>
        <div className="flex w-[29px] justify-center"><svg width="14" height="22" viewBox="0 0 14 22" className="-ml-[2px]"><rect x="3" y="1" width="8" height="14" rx="2" fill="#fff" /><path d="M1 9v5c0 2 1.500 3 3 3h6c1.500 0 3-1 3-3V9M7 17v4" stroke="#fff" strokeWidth="1.500" fill="none" /></svg></div>
        <div className="flex w-[31px] justify-center"><svg width="17" height="17" viewBox="0 0 17 17" fill="none" strokeWidth="1.300"><path d="M1 16.500C1.500 8 7 2 16 1.500" stroke="#9a9d99" /><path d="M4.500 16.500C5 10.500 9 6 16 5.500" stroke="#9a9d99" /><path d="M8 16.500c.5-4 3-7 8-7.500" stroke="#fff" /><path d="M11 16.500c.5-2 2-3.500 5-4" stroke="#fff" /><circle cx="14.800" cy="15.300" r="1.700" fill="#fff" /></svg></div>
        <div className="flex w-[29px] justify-center"><svg width="20" height="13" viewBox="0 0 20 13" fill="none" stroke="#fff" strokeWidth="1.300" className="-ml-[2px]"><path d="M1 1h16v11H1zM17 4h2v5h-2" /><path d="M3.500 3.500h7v6h-7z" fill="#fff" /></svg></div>
        <div className="flex w-[30px] justify-center"><Line w={21} h={18} box="0 0 21 18" sw={1.300}><path d="M1 6.500h3l4-4v13l-4-4H1zM11 6.500c1 1.500 1 3.500 0 5M14 4c2 3 2 7 0 10M17 1.500c3 4.500 3 10.500 0 15" /></Line></div>
        <div className="flex w-[84px] flex-col items-center text-[14.300px] leading-[22.500px] text-white"><span>9:11 PM</span><span>6/21/2024</span></div>
        <div className="flex w-[50px] justify-center"><Line w={22} h={22} box="0 0 22 22" sw={1.400}><path d="M7.500 17.500H1.500V1.500h19v12M7.500 17.500l3.500 3.500v-3.500M18 10.500c-.5 3-1.500 5-5 7 3 3 8 1.500 8-2.500" /></Line></div>
        <div className="relative flex w-[50px] justify-center">
          <svg width="26" height="26" viewBox="0 0 28 28" className="-ml-[2px] -mt-1">
            <defs><linearGradient id="cpa" x1="0" y1="0" x2="0" y2="1"><stop offset="0" stopColor="#2187e8" /><stop offset=".6" stopColor="#3fc0b4" /><stop offset="1" stopColor="#d9cf33" /></linearGradient><linearGradient id="cpb" x1="0" y1="0" x2="0" y2="1"><stop offset="0" stopColor="#8f63f2" /><stop offset=".6" stopColor="#ee5da0" /><stop offset="1" stopColor="#f9924f" /></linearGradient></defs>
            <path d="M9 1h8c3 0 3 2 4 5h-5c-3 0-3 3-4 7l-1 5c-1 2-2 3-4 3H4c-3 0-4-2-3-5L5 4c1-2 2-3 4-3z" fill="url(#cpa)" />
            <path d="M16 7h8c3 0 4 2 3 5l-3 11c-1 2-2 4-5 4h-7c3-1 3-3 4-6z" fill="url(#cpb)" />
          </svg>
          <span className="absolute left-[18px] top-[15px] flex h-[11px] w-[19px] items-center justify-center rounded-[2px] bg-[#f8c51c] text-[8.500px] font-bold leading-none text-[#222]">PRE</span>
        </div>
        <div className="h-full w-[16px] pl-[10px]"><div className="h-full w-px bg-[#5a5f58]" /></div>
      </div>
    </div>
  );
}

export default function App() {
  return (
    <div className="relative flex h-[1080px] w-[1920px] flex-col overflow-hidden bg-[#2b2a33] font-['Open_Sans']">
      <TabBar />
      <NavBar />
      <BookmarksBar />
      <div className="flex h-[889px] shrink-0">
        <div className="flex w-[1899px] flex-col bg-[#fefefe] font-['Noto_Sans_CJK_SC']">
          <PageHeader />
          <main className="flex h-[711px] shrink-0">
            <Hero />
            <SignUpForm />
          </main>
          <div className="h-[22px] shrink-0 border-t border-[#dfe3e8] bg-[#3fb2f8]" />
          <div className="h-[4px] shrink-0 border-t border-[#8d8aa0] bg-[#d64b40]" />
          <DebugBar />
        </div>
        <Scrollbar />
      </div>
      <Taskbar />
      <PosterTitle />
      <FeatureNotes />
      <svg width="20" height="28" viewBox="0 0 20 28" className="absolute left-[736px] top-[255px] drop-shadow-[0_0_1px_rgba(0,0,0,0.5)]">
        <path d="M3 2l14 14.500-5.500.5-3 2L3 24z" fill="#000" stroke="#fff" strokeWidth="1.200" strokeLinejoin="round" />
      </svg>
    </div>
  );
}
